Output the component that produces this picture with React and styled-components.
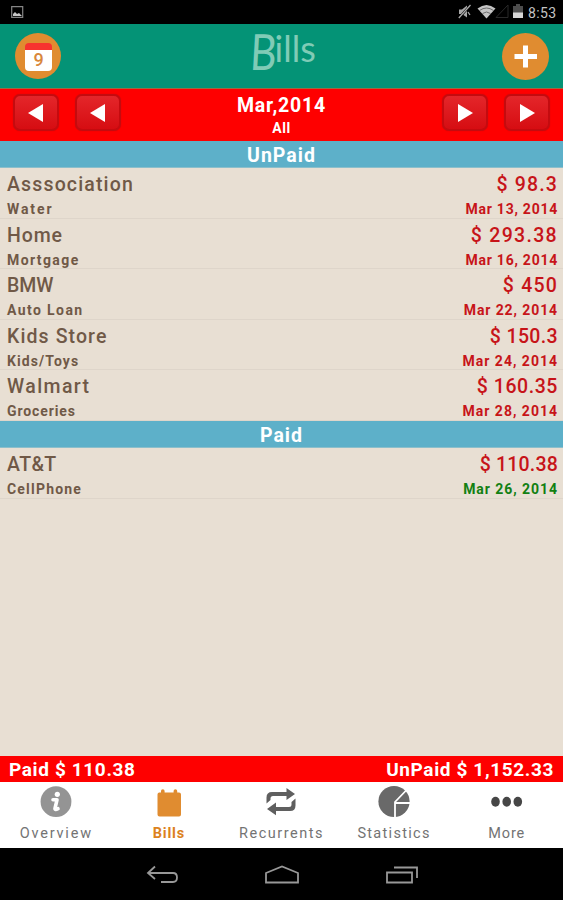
import React from 'react';
import styled, { createGlobalStyle } from 'styled-components';

// the tracking values are the letter-spacing of each label in px
const unpaid = [
  { name: 'Asssociation', tracking: 1.15, category: 'Water', catTracking: 1.9, amount: '$ 98.3', amountTracking: 1.15, date: 'Mar 13, 2014', dateTracking: 0.75 },
  { name: 'Home', tracking: 0.9, category: 'Mortgage', catTracking: 1.4, amount: '$ 293.38', amountTracking: 1.3, date: 'Mar 16, 2014', dateTracking: 0.75 },
  { name: 'BMW', tracking: 0, category: 'Auto Loan', catTracking: 1.4, amount: '$ 450', amountTracking: 1.2, date: 'Mar 22, 2014', dateTracking: 0.9 },
  { name: 'Kids Store', tracking: 1.1, category: 'Kids/Toys', catTracking: 1.1, amount: '$ 150.3', amountTracking: 0.35, date: 'Mar 24, 2014', dateTracking: 1 },
  { name: 'Walmart', tracking: 1.4, category: 'Groceries', catTracking: 0.9, amount: '$ 160.35', amountTracking: 0.55, date: 'Mar 28, 2014', dateTracking: 1 },
];

const paid = [
  { name: 'AT&T', tracking: 0.4, category: 'CellPhone', catTracking: 1.2, amount: '$ 110.38', amountTracking: 0.2, date: 'Mar 26, 2014', dateTracking: 0.95, settled: true },
];

const GlobalStyle = createGlobalStyle`
  * {
    box-sizing: border-box;
  }

  body {
    margin: 0;
    background-color: #e8dfd3;
    font-family: Roboto, "Liberation Sans", sans-serif;
  }
`;

const Screen = styled.div`
  display: flex;
  flex-direction: column;
  width: 100%;
  height: 900px;
  overflow: hidden;
  background-color: #e8dfd3;
`;

const StatusBar = styled.div`
  display: flex;
  justify-content: space-between;
  height: 24px;
  flex-shrink: 0;
  background-color: #000;

  svg {
    display: block;
  }
`;

const StatusRight = styled.div`
  display: flex;
`;

const Clock = styled.span`
  width: 35px;
  color: #c4c4c4;
  font-size: 14px;
  line-height: 26px;
  letter-spacing: 0.4px;
`;

const Header = styled.header`
  display: flex;
  justify-content: space-between;
  height: 65px;
  flex-shrink: 0;
  padding: 9px 14px 0 15px;
  background-color: #049376;
  border-bottom: 1px solid #9b6a40;
`;

const RoundButton = styled.button`
  width: ${(props) => props.$size}px;
  height: ${(props) => props.$size}px;
  padding: 0;
  border: none;
  border-radius: 50%;
  background-color: #e08c30;

  svg {
    display: block;
  }
`;

const Title = styled.h1`
  display: flex;
  width: 64px;
  height: 48px;
  margin: 0;
  color: #80cbb6;
  font-family: Lato, sans-serif;
  font-weight: 400;
  font-size: 36px;
  line-height: 30px;
`;

const Initial = styled.span`
  width: 25px;
  font-size: 50px;
  line-height: 36px;
  transform: scaleX(0.82) skewX(-4deg);
  transform-origin: left;
`;

const MonthBar = styled.div`
  display: flex;
  justify-content: space-between;
  height: 52px;
  flex-shrink: 0;
  padding: 5px 13px 0;
  background-color: #fe0000;
`;

const ArrowGroup = styled.div`
  display: flex;
  gap: 16px;
`;

const ArrowButton = styled.button`
  display: flex;
  align-items: center;
  justify-content: center;
  width: 46px;
  height: 37px;
  padding: 0;
  border: 2px solid #c40b0f;
  border-radius: 7px;
  background: linear-gradient(#e4262a, #d60d12);
  box-shadow: 0 0 1px #b90c10;
`;

const Month = styled.div`
  display: flex;
  flex-direction: column;
  align-items: center;
  color: #fff;
  font-weight: 700;
`;

const MonthName = styled.span`
  font-size: 19.5px;
  line-height: 24px;
  letter-spacing: 0.8px;
`;

const MonthFilter = styled.span`
  font-size: 14px;
  line-height: 21px;
  letter-spacing: 0.6px;
`;

const SectionTitle = styled.h2`
  height: 27px;
  flex-shrink: 0;
  margin: 0;
  background-color: #5db0c9;
  border-bottom: 1px solid #8cbfcb;
  color: #fff;
  text-align: center;
  font-size: 19.5px;
  font-weight: 700;
  line-height: 29px;
  letter-spacing: 1px;
`;

const BillRow = styled.div`
  display: flex;
  justify-content: space-between;
  height: 50.6px;
  flex-shrink: 0;
  padding: 4px 5px 0 7px;
  border-bottom: 1px solid #ded5ca;
`;

const Column = styled.div`
  display: flex;
  flex-direction: column;
  align-items: ${(props) => (props.$end ? 'flex-end' : 'flex-start')};
`;

const BillName = styled.span`
  color: #705947;
  font-size: 19.5px;
  font-weight: 500;
  line-height: 25px;
  letter-spacing: ${(props) => props.$tracking}px;
`;

const Category = styled.span`
  color: #705947;
  font-size: 14px;
  font-weight: 700;
  line-height: 24px;
  letter-spacing: ${(props) => props.$tracking}px;
`;

const Amount = styled.span`
  color: #c71419;
  font-size: 19.5px;
  font-weight: 500;
  line-height: 25px;
  letter-spacing: ${(props) => props.$tracking}px;
`;

const DueDate = styled.span`
  color: ${(props) => (props.$settled ? '#128012' : '#c71419')};
  font-size: 14px;
  font-weight: 700;
  line-height: 24px;
  letter-spacing: ${(props) => props.$tracking}px;
`;

const Totals = styled.div`
  display: flex;
  justify-content: space-between;
  height: 26px;
  flex-shrink: 0;
  margin-top: auto;
  padding: 0 9px;
  background-color: #fe0000;
  color: #fff;
  font-size: 19px;
  font-weight: 700;
  line-height: 27px;
  letter-spacing: 0.63px;
`;

const TabBar = styled.nav`
  display: grid;
  grid-template-columns: repeat(5, 1fr);
  height: 66px;
  flex-shrink: 0;
  background-color: #fff;
`;

const Tab = styled.div`
  display: flex;
  flex-direction: column;
  align-items: center;
  padding-top: 3px;
  color: ${(props) => (props.$active ? '#dc821e' : '#737373')};
  font-size: 14.5px;
  font-weight: ${(props) => (props.$active ? 700 : 400)};
  line-height: 30px;
  letter-spacing: ${(props) => props.$tracking}px;

  svg {
    display: block;
    flex-shrink: 0;
  }
`;

const NavBar = styled.div`
  display: flex;
  justify-content: center;
  gap: 84px;
  height: 52px;
  flex-shrink: 0;
  padding-top: 17px;
  background-color: #000;
`;

const Arrow = ({ left }) => (
  <svg width="16" height="18" viewBox="0 0 16 18">
    <path d={left ? 'M15 0v18L0 9z' : 'M1 0v18L16 9z'} fill="#fff" />
  </svg>
);

const CalendarIcon = () => (
  <svg width="46" height="46" viewBox="0 0 46 46">
    <path d="M10 17h27v17a4 4 0 0 1-4 4H14a4 4 0 0 1-4-4z" fill="#fff" />
    <path d="M10 17v-3a4 4 0 0 1 4-4h19a4 4 0 0 1 4 4v3z" fill="#f7332f" />
    <text x="23.5" y="33" textAnchor="middle" fontSize="18" fontWeight="500" fontFamily="Roboto" fill="#d9873c">9</text>
  </svg>
);

const InfoIcon = () => (
  <svg width="32" height="34" viewBox="0 0 32 34">
    <circle cx="16" cy="16.7" r="15.4" fill="#949494" />
    <circle cx="17.3" cy="9.3" r="2.6" fill="#fff" />
    <path d="M13 14.8h4l-2 8.5q-.3 2 3 .4" fill="none" stroke="#fff" strokeWidth="3.6" strokeLinejoin="round" strokeLinecap="round" />
  </svg>
);

const BillsIcon = () => (
  <svg width="32" height="34" viewBox="0 0 32 34">
    <path d="M6 7.500h2V6a1.800 1.800 0 0 1 3.600 0v1.500h9V6a1.800 1.800 0 0 1 3.600 0v1.500H26a2 2 0 0 1 2 2V29.500a2 2 0 0 1-2 2H6.500a2 2 0 0 1-2-2V9.500a2 2 0 0 1 1.500-2z" fill="#e08c30" />
  </svg>
);

const RecurrentsIcon = () => (
  <svg width="32" height="34" viewBox="0 0 32 34">
    <path d="M1.500 18.500V12.500Q1.500 7 7 7H21.500V3L30 9l-8.500 6v-4H8q-2.500 0-2.500 2.500v1.500z" fill="#5f5f5f" />
    <path d="M30.500 13.500V20.500Q30.500 26 25 26H11v4.200L2 24l9-6.500V22H24q2.500 0 2.500-2.500v-2.500z" fill="#5f5f5f" />
  </svg>
);

const StatisticsIcon = () => (
  <svg width="32" height="34" viewBox="0 0 32 34">
    <circle cx="16" cy="16.500" r="15.600" fill="#696969" />
    <path d="M17 33V17L28.500 5M17 18H32" fill="none" stroke="#fff" strokeWidth="1.800" />
  </svg>
);

const MoreIcon = () => (
  <svg width="32" height="34" viewBox="0 0 32 34">
    <ellipse cx="4.500" cy="16.700" rx="4.300" ry="5" fill="#464646" />
    <ellipse cx="15.700" cy="16.700" rx="4.300" ry="5" fill="#464646" />
    <ellipse cx="26.800" cy="16.700" rx="4.300" ry="5" fill="#464646" />
  </svg>
);

const tabs = [
  { label: 'Overview', tracking: 1.8, Icon: InfoIcon },
  { label: 'Bills', tracking: 0.8, Icon: BillsIcon, active: true },
  { label: 'Recurrents', tracking: 1.5, Icon: RecurrentsIcon },
  { label: 'Statistics', tracking: 1.3, Icon: StatisticsIcon },
  { label: 'More', tracking: 0.9, Icon: MoreIcon },
];

const Bill = ({ bill }) => (
  <BillRow>
    <Column>
      <BillName $tracking={bill.tracking}>{bill.name}</BillName>
      <Category $tracking={bill.catTracking}>{bill.category}</Category>
    </Column>
    <Column $end>
      <Amount $tracking={bill.amountTracking}>{bill.amount}</Amount>
      <DueDate $settled={bill.settled} $tracking={bill.dateTracking}>{bill.date}</DueDate>
    </Column>
  </BillRow>
);

function App() {
  return (
    <Screen>
      <GlobalStyle />
      <StatusBar>
        <svg width="30" height="24" viewBox="0 0 30 24">
          <path d="M11.700 6.700h11v10.600h-11z" fill="none" stroke="#858585" strokeWidth="1.200" />
          <path d="M13 16v-2l2-2 2 2 2-1 3 3z" fill="#c8c8c8" />
        </svg>
        <StatusRight>
          <svg width="74" height="24" viewBox="454 0 74 24">
            <path d="M459 9.500h3l5-4v12l-5-3.500h-3z" fill="#a8a8a8" />
            <path d="M458.500 18.500L471 4.500" stroke="#000" strokeWidth="2.500" />
            <path d="M458.800 18L470.500 5M468 12l2 3" stroke="#a8a8a8" strokeWidth="1.300" />
            <path d="M477.500 8.500q9-7 18 0l-9 10z" fill="#c4c4c4" />
            <path d="M479.500 10.500q7-5 14 0M482.500 13.500q4-3 8 0" fill="none" stroke="#555" strokeWidth=".8" />
            <path d="M508 5v12.500h-12z" fill="none" stroke="#292929" />
            <path d="M516 4h4v2h3v12h-10V6h3z" fill="#4d4d4d" />
            <path d="M513 12.500h10V18h-10z" fill="#d6d6d6" />
          </svg>
          <Clock>8:53</Clock>
        </StatusRight>
      </StatusBar>
      <Header>
        <RoundButton $size={46}>
          <CalendarIcon />
        </RoundButton>
        <Title><Initial>B</Initial>ills</Title>
        <RoundButton $size={47}>
          <svg width="47" height="47" viewBox="0 0 47 47">
            <path d="M23.500 12.500v22M12.500 23.500h22.500" stroke="#fff" strokeWidth="5" />
          </svg>
        </RoundButton>
      </Header>
      <MonthBar>
        <ArrowGroup>
          <ArrowButton><Arrow left /></ArrowButton>
          <ArrowButton><Arrow left /></ArrowButton>
        </ArrowGroup>
        <Month>
          <MonthName>Mar,2014</MonthName>
          <MonthFilter>All</MonthFilter>
        </Month>
        <ArrowGroup>
          <ArrowButton><Arrow /></ArrowButton>
          <ArrowButton><Arrow /></ArrowButton>
        </ArrowGroup>
      </MonthBar>
      <SectionTitle>UnPaid</SectionTitle>
      {unpaid.map((bill) => <Bill key={bill.name} bill={bill} />)}
      <SectionTitle>Paid</SectionTitle>
      {paid.map((bill) => <Bill key={bill.name} bill={bill} />)}
      <Totals>
        <span>Paid $ 110.38</span>
        <span>UnPaid $ 1,152.33</span>
      </Totals>
      <TabBar>
        {tabs.map(({ label, tracking, Icon, active }) => (
          <Tab key={label} $active={active} $tracking={tracking}>
            <Icon />
            {label}
          </Tab>
        ))}
      </TabBar>
      <NavBar>
        <svg width="36" height="24" viewBox="0 0 36 24">
          <path d="M11 1.500L4 8l7 6M4 8h25q4 0 4 4.500t-4 4.500H17" fill="none" stroke="#989898" strokeWidth="1.800" />
        </svg>
        <svg width="36" height="24" viewBox="0 0 36 24">
          <path d="M2 17.500V8L18 1.500 34 8v9.500z" fill="none" stroke="#989898" strokeWidth="1.800" />
        </svg>
        <svg width="36" height="24" viewBox="0 0 36 24">
          <path d="M3 7.500h25v10H3zM10 2.500h23V13" fill="none" stroke="#989898" strokeWidth="1.800" />
        </svg>
      </NavBar>
    </Screen>
  );
}

export default App;
